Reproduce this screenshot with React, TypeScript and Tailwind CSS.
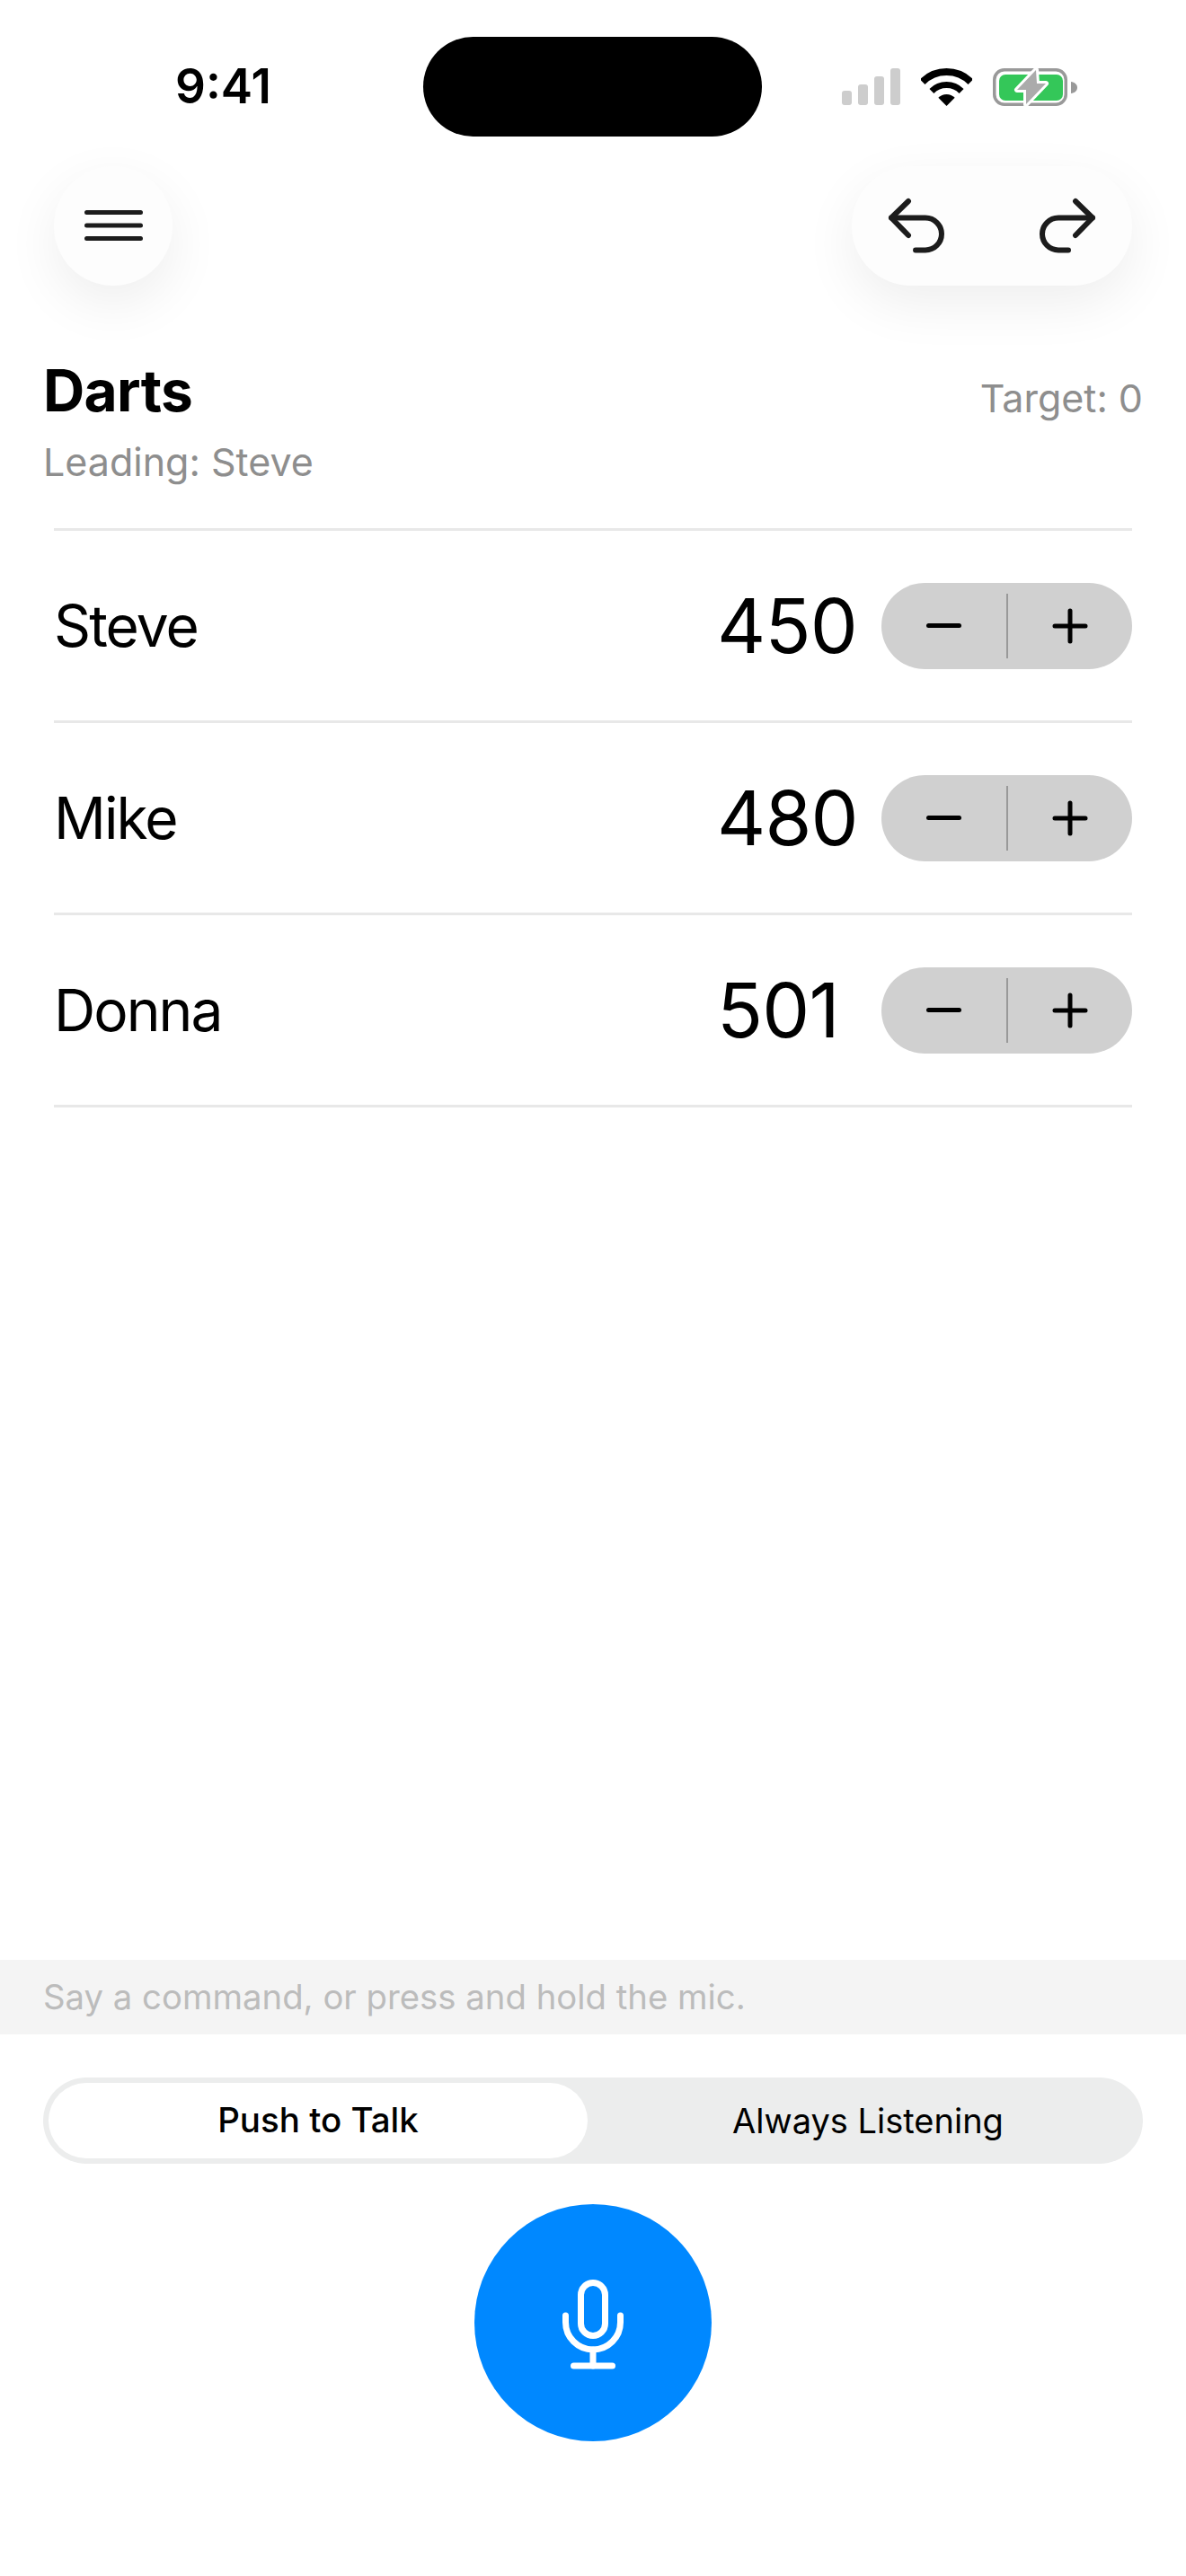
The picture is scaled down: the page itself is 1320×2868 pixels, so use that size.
const players = [
  { name: "Steve", score: 450 },
  { name: "Mike", score: 480 },
  { name: "Donna", score: 501 },
];

function Signal() {
  return (
    <svg width="65" height="41" viewBox="0 0 65 41" fill="#cdcdcd">
      <rect x="0" y="25" width="11" height="16" rx="3" />
      <rect x="18" y="18" width="11" height="23" rx="3" />
      <rect x="36" y="9" width="11" height="32" rx="3" />
      <rect x="54" y="0" width="11" height="41" rx="3" />
    </svg>
  );
}

function Wifi() {
  return (
    <svg width="57" height="42" viewBox="0 0 57 42" fill="none" stroke="#000">
      <path d="M1.63 15.13A38 38 0 0 1 55.37 15.13" strokeWidth="8" />
      <path d="M11.9 25.4A23.5 23.5 0 0 1 45.1 25.4" strokeWidth="7" />
      <path d="M28.5 42L19.3 32.8A13 13 0 0 1 37.7 32.8Z" fill="#000" stroke="none" />
    </svg>
  );
}

function Battery() {
  return (
    <svg width="94" height="42" viewBox="0 0 94 42" fill="none">
      <rect x="1.750" y="1.750" width="79.500" height="38.500" rx="11" stroke="#999" strokeWidth="3.500" />
      <rect x="7" y="7" width="71" height="29" rx="7" fill="#34c759" />
      <path d="M87 15C91 15.5 94 18 94 21.500C94 25 91 27.500 87 28Z" fill="#999" />
      <path d="M48 2L27 24H37L37 40L59 17H49Z" fill="#ababab" stroke="#fff" strokeWidth="6" paintOrder="stroke" strokeLinejoin="round" />
    </svg>
  );
}

function Undo({ flip }: { flip?: boolean }) {
  return (
    <svg width="68" height="68" viewBox="0 0 68 68" fill="none" stroke="#1c1c1c" strokeWidth="6" strokeLinecap="round" strokeLinejoin="round" className={flip ? "-scale-x-100" : ""}>
      <path d="M25 6L6 24.500L25 44" />
      <path d="M6 24.500H44A17.500 17.500 0 0 1 44 60.500H33" />
    </svg>
  );
}

function Mic() {
  return (
    <svg width="80" height="110" viewBox="0 0 80 110" fill="none" stroke="#fff" strokeWidth="7" strokeLinecap="round">
      <rect x="26.500" y="10.500" width="27" height="59" rx="13.500" />
      <path d="M9.500 47V54.500A30.500 30.500 0 0 0 70.500 54.500V47" />
      <path d="M40 85V103" />
      <path d="M18.500 103H61.500" />
    </svg>
  );
}

function Stepper() {
  return (
    <div className="flex h-[96px] w-[279px] items-center rounded-[48px] bg-[#d0d0d0]">
      <button className="flex flex-1 items-center justify-center">
        <span className="h-[5px] w-[39px] rounded-full bg-black" />
      </button>
      <span className="h-[72px] w-[2px] bg-[#999]" />
      <button className="flex flex-1 items-center justify-center">
        <svg width="40" height="40" viewBox="0 0 40 40" stroke="#000" strokeWidth="5" strokeLinecap="round">
          <path d="M3 20H37M20 3V37" />
        </svg>
      </button>
    </div>
  );
}

export default function App() {
  return (
    <div className="flex h-[2868px] w-[1320px] flex-col bg-white text-black [font-family:Inter,sans-serif]">
      {/* status bar */}
      <div className="mt-[41px] flex h-[111px] items-center">
        <div className="w-[471px] pl-[195px] text-[53px] font-semibold leading-none">9:41</div>
        <div className="h-[111px] w-[377px] rounded-[56px] bg-black" />
        <div className="ml-[89px] flex items-center">
          <Signal />
          <div className="ml-[23px]"><Wifi /></div>
          <div className="ml-[23px]"><Battery /></div>
        </div>
      </div>

      {/* toolbar */}
      <div className="mx-[60px] mt-[33px] flex items-center justify-between">
        <button className="flex h-[133px] w-[132px] items-center justify-center rounded-full bg-[#fdfdfd] shadow-[0_20px_60px_rgba(0,0,0,0.07)]">
          <svg width="65" height="36" viewBox="0 0 65 36" fill="#1c1c1c">
            <rect y="0" width="65" height="5" rx="2.500" />
            <rect y="14.500" width="65" height="5" rx="2.500" />
            <rect y="29" width="65" height="5" rx="2.500" />
          </svg>
        </button>
        <div className="flex h-[133px] w-[312px] items-center justify-between rounded-[66px] bg-[#fdfdfd] px-[38px] shadow-[0_20px_60px_rgba(0,0,0,0.07)]">
          <Undo />
          <Undo flip />
        </div>
      </div>

      {/* title */}
      <div className="mx-[48px] mt-[82px] flex items-start justify-between">
        <div>
          <h1 className="text-[64px] font-bold leading-[70px] tracking-[-0.01em]">Darts</h1>
          <p className="mt-[19px] text-[43px] leading-[50px] text-[#8e8e8e]">Leading: Steve</p>
        </div>
        <p className="mt-[18px] text-[43px] leading-[50px] text-[#8e8e8e]">Target: 0</p>
      </div>

      {/* players */}
      <div className="mx-[60px] mt-[49px] border-t-[3px] border-[#e8e8e8]">
        {players.map((p) => (
          <div key={p.name} className="flex h-[214px] items-center border-b-[3px] border-[#e8e8e8]">
            <span className="flex-1 text-[64px] tracking-[-0.03em]">{p.name}</span>
            <span className="w-[183px] text-[84px] tracking-[-0.01em]">{p.score}</span>
            <Stepper />
          </div>
        ))}
      </div>

      <div className="flex-1" />

      {/* hint */}
      <div className="flex h-[83px] items-center bg-[#f4f4f4] px-[48px] text-[38.3px] text-[#bcbcbc]">
        Say a command, or press and hold the mic.
      </div>

      {/* mode switch */}
      <div className="mx-[48px] mt-[48px] flex h-[96px] items-center rounded-[48px] bg-[#eceded] p-[6px] text-[38.5px]">
        <div className="flex h-[84px] w-[600px] items-center justify-center rounded-[42px] bg-white font-medium">Push to Talk</div>
        <div className="flex flex-1 items-center justify-center pl-[12px] text-[38px]">Always Listening</div>
      </div>

      {/* mic */}
      <button className="mx-auto mb-[150px] mt-[45px] flex h-[264px] w-[264px] items-center justify-center rounded-full bg-[#0088ff]">
        <Mic />
      </button>
    </div>
  );
}
